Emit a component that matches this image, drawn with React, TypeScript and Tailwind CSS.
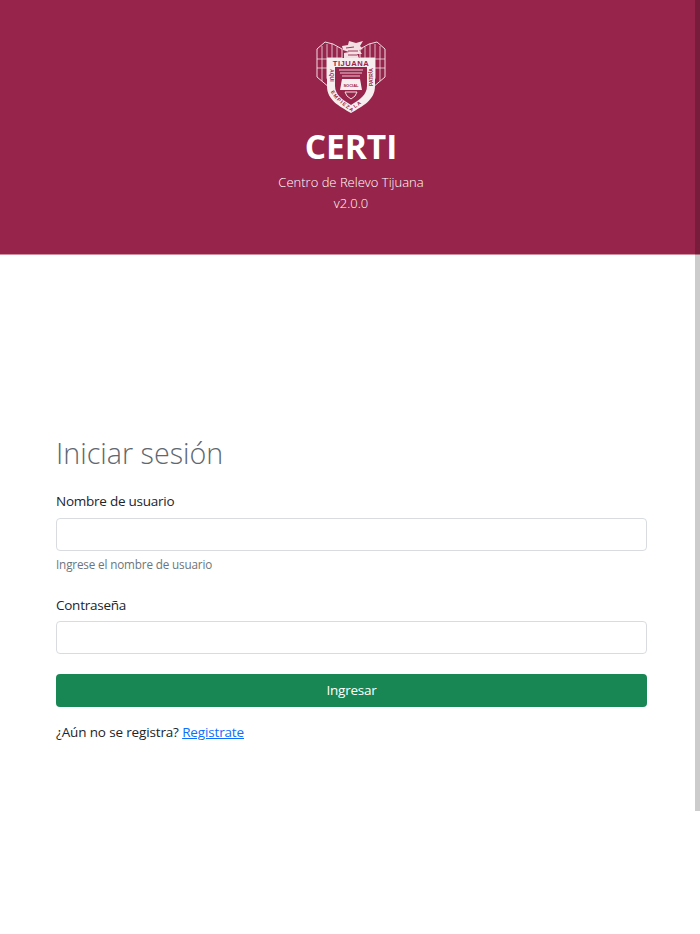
import React from "react";

const crimson = "#97244a";

function Logo() {
  const face = "'Liberation Sans', sans-serif";
  return (
    <svg width="72" height="74" viewBox="0 0 72 74" fill="none" className="block">
      {/* wings */}
      <g stroke="#f3dfe4" strokeWidth="1">
        <path d="M2 9 L10 2 L18 4 L27 9 L27 18 L12 18 L12 38 L15 48 L2 37 Z" />
        <path d="M70 9 L62 2 L54 4 L45 9 L45 18 L60 18 L60 38 L57 48 L70 37 Z" />
        <path d="M7 6 L7 41 M12 4 L12 18 M17 4 L17 18 M22 7 L22 18 M2 19 L12 19 M2 28 L12 28" strokeWidth="0.8" />
        <path d="M65 6 L65 41 M60 4 L60 18 M55 4 L55 18 M50 7 L50 18 M70 19 L60 19 M70 28 L60 28" strokeWidth="0.8" />
      </g>
      {/* eagle */}
      <path d="M27 6 L33 5 L34 1 L41 3 L48 1 L45 6 L48 9 L44 10 L47 14 L42 14 L44 18 L29 18 L29 13 L34 12 L28 10 Z" fill="#f3dfe4" />
      <path d="M31 8 L39 7 M33 11 L43 11 M33 15 L42 15" stroke={crimson} strokeWidth="0.9" />
      {/* shield */}
      <path d="M12 18 L60 18 L60 46 C60 60 48 66 36 73 C24 66 12 60 12 46 Z" fill="#f7eef0" />
      <path d="M20 27 L52 27 L52 46 C52 55 44 60 36 65 C28 60 20 55 20 46 Z" fill={crimson} />
      <text x="36" y="25.5" textAnchor="middle" fontSize="7.6" fontWeight="700" fontFamily={face} fill={crimson} letterSpacing="0.5">TIJUANA</text>
      <path id="lemaIzq" d="M14.5 29 L14.5 46" />
      <path id="lemaBajo" d="M14 47 C17 58 27 65 36 71 C45 65 55 58 58 47" />
      <path id="lemaDer" d="M57.5 46 L57.5 28" />
      <text fontSize="5" fontWeight="700" fontFamily={face} fill={crimson}>
        <textPath href="#lemaIzq">AQUI</textPath>
      </text>
      <text fontSize="5" fontWeight="700" fontFamily={face} fill={crimson}>
        <textPath href="#lemaBajo" startOffset="5" letterSpacing="1.2">EMPIEZA LA</textPath>
      </text>
      <text fontSize="5" fontWeight="700" fontFamily={face} fill={crimson}>
        <textPath href="#lemaDer">PATRIA</textPath>
      </text>
      {/* inner scene */}
      <path d="M24 30 L48 30 M25 33 L47 33 M27 36 L45 36" stroke="#f3dfe4" strokeWidth="0.9" />
      <path d="M27 39 L45 39 L47 50 L25 50 Z" fill="#f7eef0" />
      <text x="36" y="47" textAnchor="middle" fontSize="4" fontWeight="700" fontFamily={face} fill={crimson}>SOCIAL</text>
      <path d="M30 52 L42 52 L40 56 L36 59 L32 56 Z" stroke="#f3dfe4" strokeWidth="1" />
    </svg>
  );
}

export default function App() {
  return (
    <div className="relative h-[934px] w-[700px] overflow-hidden bg-white font-['Open_Sans',sans-serif] text-[#212529]">
      <header className="flex h-[255px] flex-col items-center border-b border-[#d38ea0] bg-[#97244a] pl-[2px] pt-[40px] text-white">
        <Logo />
        <h1 className="mt-[9px] text-[33.5px] leading-[46px] font-bold">CERTI</h1>
        <p className="mt-[3px] text-[13px] leading-[21px] font-light">Centro de Relevo Tijuana</p>
        <p className="text-[13px] leading-[21px] font-light">v2.0.0</p>
      </header>

      <main className="pl-[56px] pr-[53px] pt-[178px]">
        <h2 className="text-[28.7px] leading-[40px] font-light text-[#5f6870]">Iniciar sesión</h2>

        <form className="mt-[18px]">
          <label className="block text-[13.5px] leading-[21px] tracking-[-0.25px]">Nombre de usuario</label>
          <input type="text" className="mt-[6px] block h-[33px] w-full rounded-[4px] border border-[#d8dce0] bg-white" />
          <p className="mt-[4px] text-[11.7px] leading-[18px] tracking-[-0.15px] text-[#6c757d]">Ingrese el nombre de usuario</p>

          <label className="mt-[22px] block text-[13.5px] leading-[21px] tracking-[-0.25px]">Contraseña</label>
          <input type="password" className="mt-[5px] block h-[33px] w-full rounded-[4px] border border-[#d8dce0] bg-white" />

          <button type="button" className="mt-[20px] block h-[33px] w-full rounded-[4px] bg-[#198754] text-[13.5px] tracking-[-0.25px] text-white">
            Ingresar
          </button>

          <p className="mt-[15px] text-[13.5px] leading-[21px] tracking-[-0.15px]">
            ¿Aún no se registra? <a href="#" className="text-[#0d6efd] underline">Registrate</a>
          </p>
        </form>
      </main>

      {/* overlay scrollbar thumb */}
      <div className="absolute right-0 top-0 h-[811px] w-[5px] bg-black/20" />
    </div>
  );
}
